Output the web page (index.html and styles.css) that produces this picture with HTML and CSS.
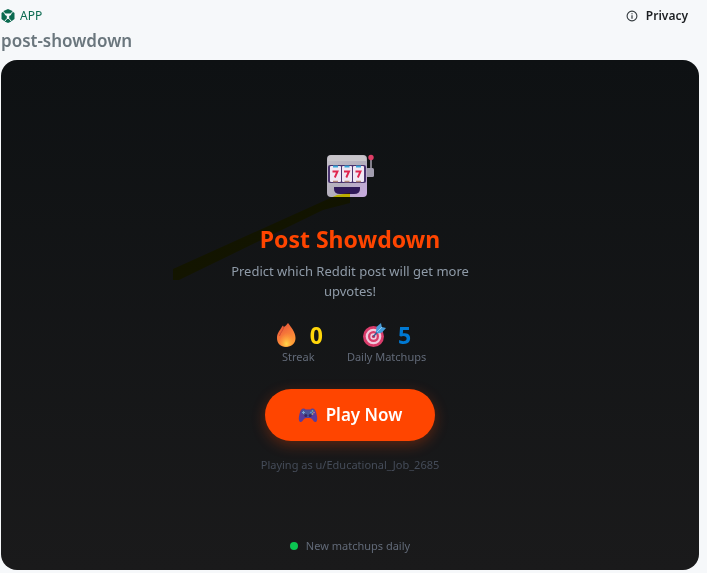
FILE: index.html
```html
<!DOCTYPE html>
<html lang="en">
<head>
  <meta charset="UTF-8">
  <meta name="viewport" content="width=device-width, initial-scale=1.0">
  <title>post-showdown</title>
  <link rel="stylesheet" href="styles.css">
</head>
<body>
  <header class="app-header">
    <div class="app-bar">
      <span class="app-tag">
        <svg class="app-icon" viewBox="0 0 14 14" aria-hidden="true">
          <path d="M7 0 9.800 1.300 13.500 4V10L9.800 12.700 7 14 4.200 12.700.5 10V4L4.200 1.300z" fill="#0b6a50"/>
          <path d="M3.600 4.500H10.400L10 6 8.200 7V10H5.800V7L4 6z" fill="#f6f8fa"/>
          <path d="M2.200 2.500 4.200 4.900M11.800 2.500 9.800 4.900M6 9.600 3.400 12.600M8 9.600 10.600 12.600" stroke="#f6f8fa" stroke-width="1"/>
        </svg>
        APP
      </span>
      <a class="privacy" href="#">
        <svg class="info-icon" viewBox="0 0 12 12" aria-hidden="true">
          <circle cx="6" cy="6" r="4.900" fill="none" stroke="#333a3e" stroke-width="1.100"/>
          <path d="M6 5.200V8.800M6 3.200V4.300" stroke="#333a3e" stroke-width="1.200"/>
        </svg>
        Privacy
      </a>
    </div>
    <h1 class="app-name">post-showdown</h1>
  </header>

  <main class="card">
    <section class="hero">
      <div class="slot">
        <svg class="slot-icon" viewBox="0 0 48 48" aria-hidden="true">
          <defs>
            <linearGradient id="slotBody" x1="0" y1="0" x2="1" y2="1">
              <stop offset="0" stop-color="#c3bfc8"/>
              <stop offset=".55" stop-color="#b3aebc"/>
              <stop offset="1" stop-color="#c9a9e2"/>
            </linearGradient>
          </defs>
          <path d="M45 8V26" stroke="#aaa5b3" stroke-width="1.500"/>
          <rect x="40" y="17" width="8" height="9" rx="1.500" fill="#a29daf"/>
          <circle cx="45" cy="6.500" r="2.700" fill="#df3e66"/>
          <rect x="1" y="4" width="40" height="42" rx="4" fill="url(#slotBody)"/>
          <path d="M5 4.500H37Q40 4.500 40 8V10H2V8Q2 4.500 5 4.500z" fill="#c8c5ca"/>
          <rect x="2" y="14" width="38" height="18" rx="2" fill="#49336f"/>
          <rect x="4" y="15" width="11" height="16" rx="1" fill="#f0e8f4"/>
          <rect x="16" y="15" width="10" height="16" rx="1" fill="#f0e8f4"/>
          <rect x="27" y="15" width="11" height="16" rx="1" fill="#f0e8f4"/>
          <path d="M7 15.500H12M18.500 15.500H23.500M30 15.500H35" stroke="#3aa7d8" stroke-width="2"/>
          <path d="M7 30.500H12M18.500 30.500H23.500M30 30.500H35" stroke="#b28a7a" stroke-width="1.500"/>
          <path d="M6.500 20.500H11.500L8.800 26.500M18 20.500H23L20.300 26.500M29.500 20.500H34.500L31.800 26.500" fill="none" stroke="#e0264f" stroke-width="1.900"/>
          <path d="M8 36H34V38Q34 43 28 43H14Q8 43 8 38z" fill="#2f1959"/>
        </svg>
        <svg class="marker" viewBox="0 0 177 88" aria-hidden="true">
          <path d="M0 76 164 2 177 0V10L150 17 6 87H0z" fill="#ffff00"/>
        </svg>
      </div>
      <h2 class="title">Post Showdown</h2>
      <p class="tagline">Predict which Reddit post will get more upvotes!</p>

      <div class="stats">
        <div class="stat">
          <div class="stat-value streak">
            <svg class="stat-icon" viewBox="0 0 24 24" aria-hidden="true">
              <defs>
                <linearGradient id="flame" x1="0" y1="0" x2=".5" y2="1">
                  <stop offset="0" stop-color="#dc4937"/>
                  <stop offset=".5" stop-color="#f5743a"/>
                  <stop offset="1" stop-color="#ff9a35"/>
                </linearGradient>
                <radialGradient id="flameCore" cx=".5" cy=".85" r=".65">
                  <stop offset="0" stop-color="#ffd84a"/>
                  <stop offset="1" stop-color="#ff9b38" stop-opacity="0"/>
                </radialGradient>
              </defs>
              <path d="M14 0C17 4 21.500 9 21.500 15C21.500 20.500 17.500 24 12 24C6.500 24 3 20.500 3 15C3 10 5.500 8 7.500 4.500C8 3.500 8.500 3 9 2.500L9.800 4C11.500 3 13 1.500 14 0z" fill="url(#flame)"/>
              <path d="M5.500 13C6.500 9.500 9 7.500 9.800 4" fill="none" stroke="#c9402f" stroke-width=".8"/>
              <path d="M13.500 6C15 10 19 12 19 17C19 21 16 23.500 12 23.500C8 23.500 5.500 21 6 17C6.800 13 12 11 13.500 6z" fill="url(#flameCore)"/>
            </svg>
            <span>0</span>
          </div>
          <div class="stat-label">Streak</div>
        </div>
        <div class="stat">
          <div class="stat-value matchups">
            <svg class="stat-icon" viewBox="0 0 24 24" aria-hidden="true">
              <circle cx="11.500" cy="13.500" r="10.500" fill="#d93c6b"/>
              <circle cx="11.500" cy="13.500" r="7.800" fill="#f0cadd"/>
              <circle cx="11.500" cy="13.500" r="5.500" fill="#d93c6b"/>
              <circle cx="11.500" cy="13.500" r="3.200" fill="#f0cadd"/>
              <circle cx="11.500" cy="13.500" r="1.600" fill="#c52b5b"/>
              <path d="M11.500 13.500 17 7" stroke="#315f96" stroke-width="1.500"/>
              <path d="M14 9 14.500 4 19 0 19.800 4 24 5 20 9.500 16 10.500z" fill="#459ddb"/>
              <path d="M15 9 20 4" stroke="#8ccbf2" stroke-width="1"/>
            </svg>
            <span>5</span>
          </div>
          <div class="stat-label">Daily Matchups</div>
        </div>
      </div>

      <button class="play-btn" type="button">
        <svg class="pad-icon" viewBox="0 0 20 16" aria-hidden="true">
          <path d="M5 1.500Q6.500 1 7.500 2.500H12.500Q13.500 1 15 1.500Q17.500 2 18.500 7Q20 13 18.300 14.700Q16.500 16 14.500 12.500Q13.500 11 12 11H8Q6.500 11 5.500 12.500Q3.500 16 1.700 14.700Q0 13 1.500 7Q2.500 2 5 1.500z" fill="#593b9c"/>
          <path d="M5 2Q3.500 3 3 6L8 10H12L17 6Q16.500 3 15 2L12.500 3.500H7.500z" fill="#4b5599"/>
          <path d="M5.500 4V7M4 5.500H7" stroke="#7ea3cc" stroke-width="1"/>
          <circle cx="7.800" cy="8.500" r="1.500" fill="#39285f"/>
          <circle cx="12.200" cy="8.500" r="1.500" fill="#39285f"/>
          <circle cx="14.500" cy="4" r=".8" fill="#8bc49b"/>
          <circle cx="13" cy="5.500" r=".8" fill="#59a9db"/>
          <circle cx="16" cy="5.500" r=".8" fill="#d16b90"/>
          <circle cx="14.500" cy="7" r=".8" fill="#d2b66d"/>
        </svg>
        Play Now
      </button>
      <p class="player">Playing as u/Educational_Job_2685</p>
    </section>

    <footer class="card-footer">
      <span class="dot"></span>
      New matchups daily
    </footer>
  </main>
</body>
</html>
```
FILE: styles.css
```css
* {
  box-sizing: border-box;
}
body {
  background-color: #f6f8fa;
  font-family: "Segoe UI", "Noto Sans", "Open Sans", sans-serif;
  color: #1c1f22;
  margin: 0;
  min-height: 100vh;
  display: flex;
  flex-direction: column;
}
h1, h2, p {
  margin: 0;
}
svg {
  display: block;
  flex: none;
}
.app-header {
  padding: 8px 0 7px 1px;
}
.app-bar {
  display: flex;
  justify-content: space-between;
  align-items: center;
  height: 16px;
  padding-right: 19px;
}
.app-tag, .privacy {
  display: flex;
  align-items: center;
  font-size: 12px;
  line-height: 16px;
}
.app-tag {
  gap: 5px;
  color: #0b6a50;
}
.app-icon {
  width: 14px;
  height: 14px;
}
.privacy {
  gap: 8px;
  color: #1c1f22;
  font-weight: 600;
  text-decoration: none;
}
.info-icon {
  width: 12px;
  height: 12px;
}
.app-name {
  color: #6a767d;
  font-size: 17px;
  font-weight: 600;
  line-height: 24px;
  margin-top: 5px;
}
.card {
  flex: 1;
  display: flex;
  flex-direction: column;
  margin: 0 8px 3px 1px;
  padding: 26px 16px 16px;
  border-radius: 16px;
  background: linear-gradient(#0e1113, #1a1a1b);
}
.hero {
  flex: 1;
  display: flex;
  flex-direction: column;
  align-items: center;
  justify-content: center;
  text-align: center;
}
.slot {
  position: relative;
  margin-bottom: 24px;
}
.slot-icon {
  width: 48px;
  height: 48px;
}
/* highlighter stroke over the slot machine */
.marker {
  position: absolute;
  top: 42px;
  right: 24px;
  width: 177px;
  height: 88px;
  mix-blend-mode: multiply;
  pointer-events: none;
}
.title {
  color: #ff4500;
  font-size: 23px;
  font-weight: 700;
  line-height: 32px;
  margin-bottom: 6px;
}
.tagline {
  max-width: 256px;
  color: #8f9ba8;
  font-size: 13px;
  line-height: 20px;
  margin-bottom: 20px;
}
.stats {
  display: flex;
  gap: 24px;
  margin-bottom: 24px;
}
.stat-value {
  display: flex;
  align-items: center;
  justify-content: center;
  gap: 12px;
  font-size: 23px;
  font-weight: 700;
  line-height: 28px;
}
.stat-icon {
  width: 24px;
  height: 24px;
}
.streak {
  color: #ffd60a;
}
.matchups {
  color: #0079d3;
}
.stat-label {
  color: #626a78;
  font-size: 11px;
  line-height: 16px;
}
.play-btn {
  display: flex;
  align-items: center;
  gap: 8px;
  padding: 12px 33px;
  border: none;
  border-radius: 26px;
  background-color: #ff4500;
  box-shadow: 0 4px 14px rgba(255, 69, 0, 0.3);
  color: #ffffff;
  font-family: inherit;
  font-size: 17px;
  font-weight: 600;
  line-height: 28px;
  cursor: pointer;
  margin-bottom: 16px;
}
.pad-icon {
  width: 20px;
  height: 16px;
}
.player {
  color: #454c59;
  font-size: 11px;
  line-height: 16px;
}
.card-footer {
  display: flex;
  align-items: center;
  justify-content: center;
  gap: 8px;
  color: #626a78;
  font-size: 11px;
  line-height: 16px;
}
.dot {
  width: 8px;
  height: 8px;
  border-radius: 50%;
  background-color: #0bc551;
}
```
